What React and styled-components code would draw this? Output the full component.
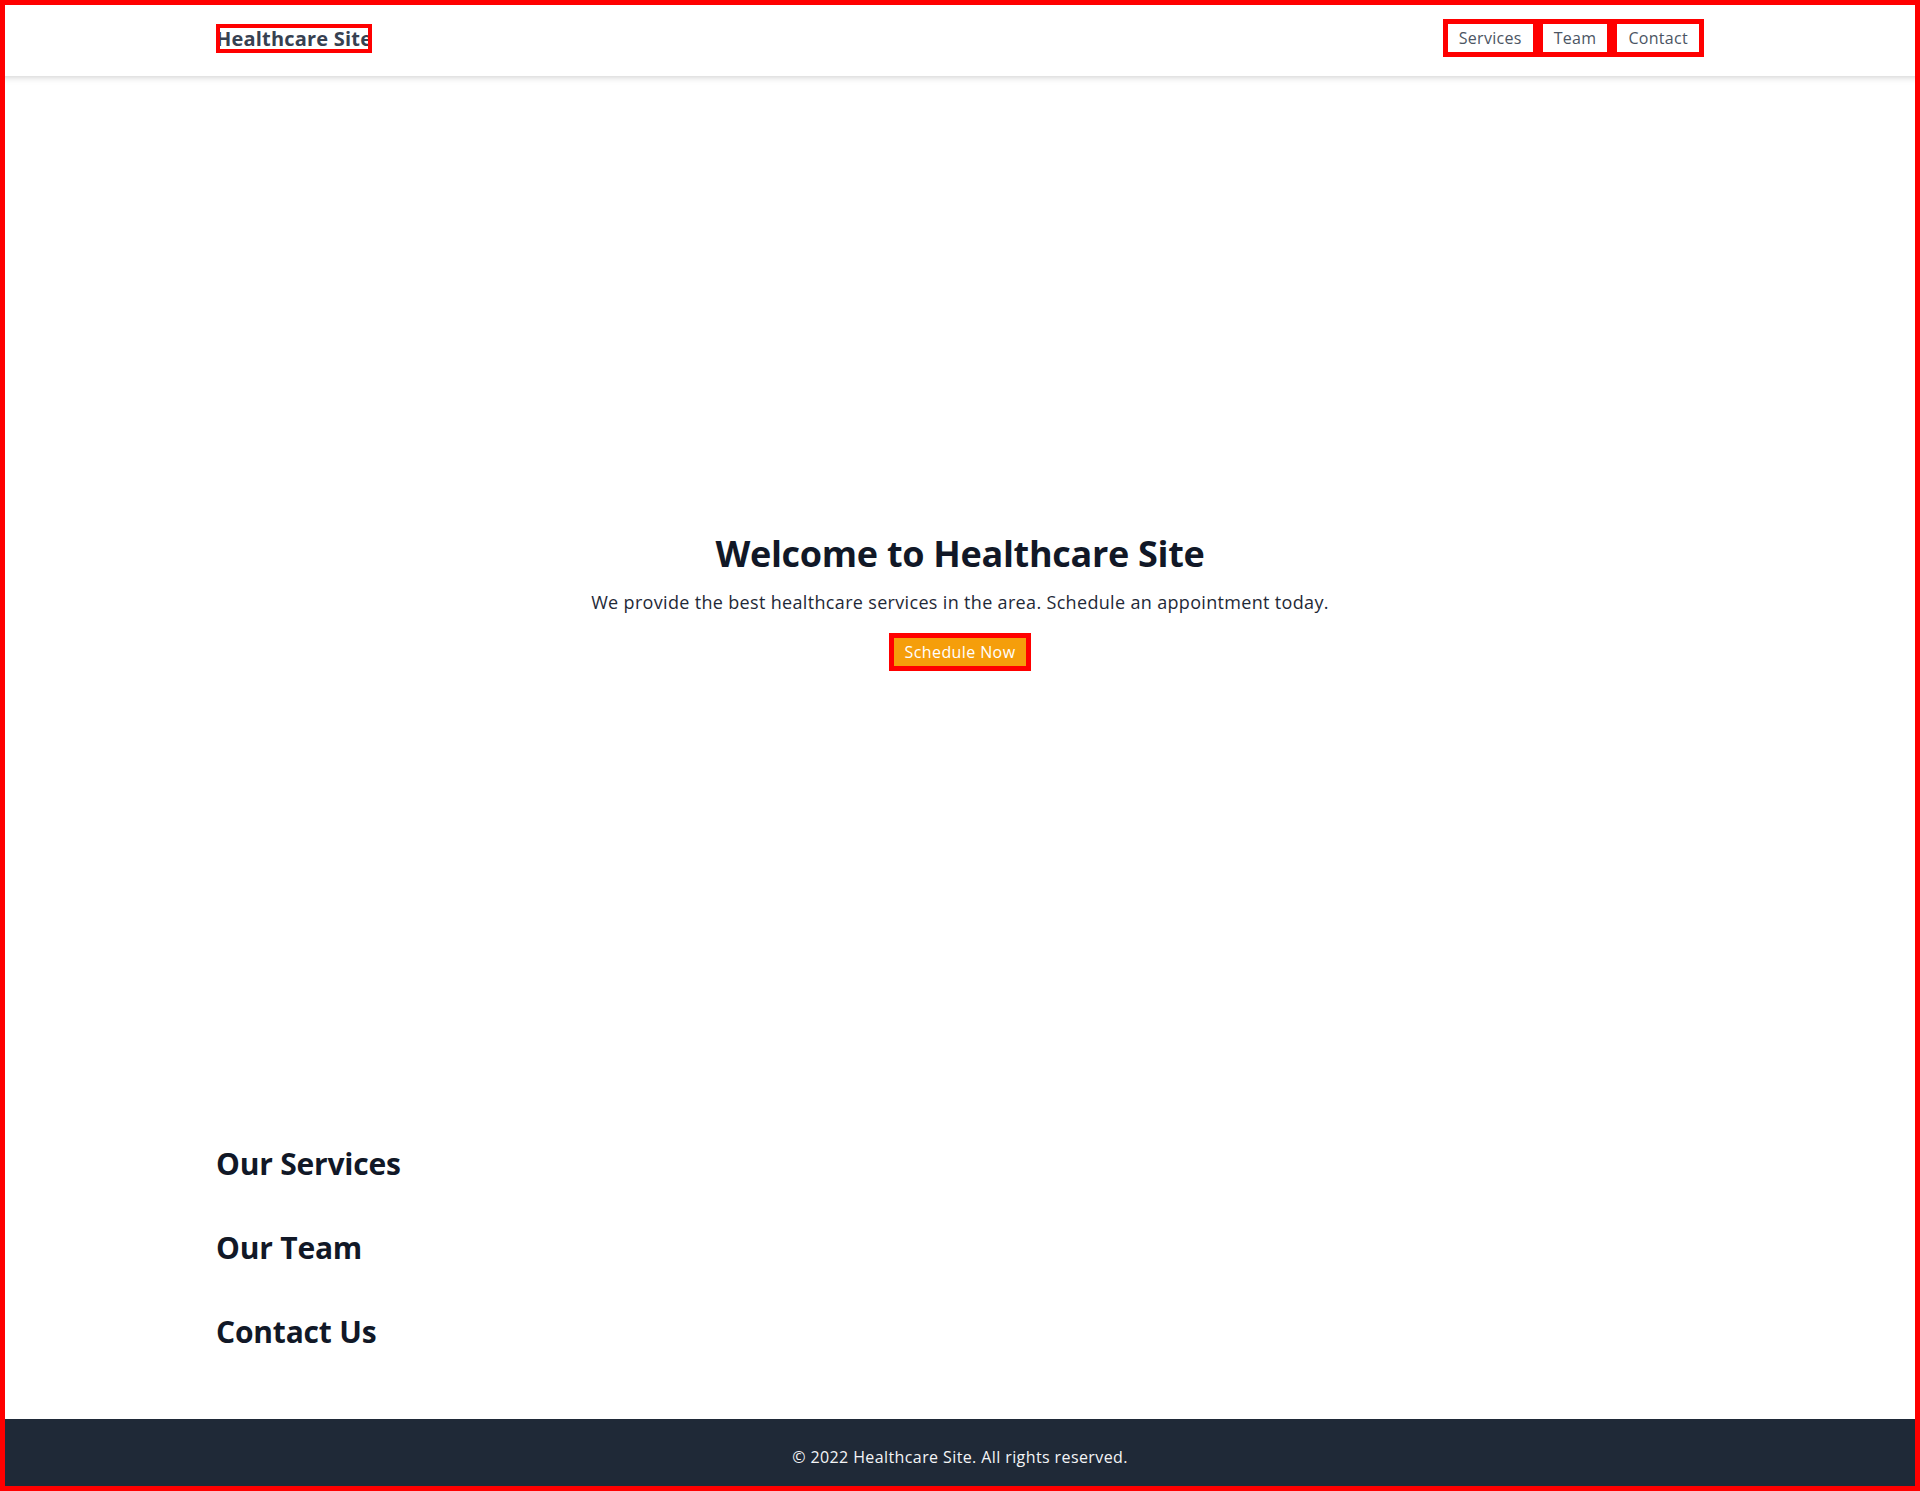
import React from "react";
import styled, { createGlobalStyle } from "styled-components";

const GlobalStyle = createGlobalStyle`
  *, *::before, *::after { box-sizing: border-box; }
  html, body { margin: 0; padding: 0; }
  body {
    font-family: "Open Sans", "Noto Sans", sans-serif;
    color: #111827;
    background: #ffffff;
    -webkit-font-smoothing: antialiased;
  }
  a { text-decoration: none; }
`;

const Page = styled.div`
  display: flex;
  flex-direction: column;
  min-height: 1491px;
`;

const Header = styled.header`
  background: #ffffff;
  box-shadow: 0 4px 6px -1px rgba(0, 0, 0, 0.1), 0 2px 4px -1px rgba(0, 0, 0, 0.06);
  position: relative;
  z-index: 1;
`;

const Container = styled.div`
  width: 100%;
  max-width: 1536px;
  margin: 0 auto;
  padding: 0 24px;
`;

const HeaderBar = styled(Container)`
  height: 76px;
  display: flex;
  align-items: center;
  justify-content: space-between;
`;

const Logo = styled.a`
  padding-top: 1px;
  font-size: 20px;
  line-height: 28px;
  font-weight: 700;
  color: #374151;
  letter-spacing: 0.2px;
  outline: 4px solid #ff0000;
  outline-offset: -4px;
`;

const Nav = styled.nav`
  display: flex;
  align-items: center;
`;

const NavLink = styled.a`
  display: block;
  padding: 7px 16px;
  font-size: 16px;
  line-height: 24px;
  color: #4b5563;
  letter-spacing: 0.3px;
  outline: 5px solid #ff0000;
  outline-offset: -5px;
`;

const Main = styled.main`
  flex: 1;
`;

const Hero = styled.section`
  display: flex;
  flex-direction: column;
  align-items: center;
  text-align: center;
  padding: 458px 24px 448px;
`;

const Title = styled.h1`
  margin: 0 0 14px;
  font-size: 36px;
  line-height: 40px;
  font-weight: 700;
  color: #111827;
  letter-spacing: -0.3px;
`;

const Subtitle = styled.p`
  margin: 0 0 17px;
  font-size: 18px;
  line-height: 28px;
  color: #1f2937;
  letter-spacing: 0.33px;
`;

const CtaButton = styled.button`
  border: none;
  background: #f59e0b;
  color: #ffffff;
  font-family: inherit;
  font-size: 16px;
  line-height: 22px;
  padding: 8px 16px;
  letter-spacing: 0.4px;
  cursor: pointer;
  outline: 5px solid #ff0000;
  outline-offset: -5px;
`;

const Sections = styled(Container)`
  padding-bottom: 48px;
`;

const Section = styled.section`
  padding: 27px 0 21px;
`;

const SectionTitle = styled.h2`
  margin: 0;
  font-size: 30px;
  line-height: 36px;
  font-weight: 700;
  color: #111827;
  letter-spacing: -0.2px;
`;

const Footer = styled.footer`
  background: #1f2937;
  padding: 26px 24px 22px;
  text-align: center;
`;

const FooterText = styled.p`
  margin: 0;
  font-size: 16px;
  line-height: 24px;
  color: #f3f4f6;
  letter-spacing: 0.4px;
`;

const Frame = styled.div`
  position: fixed;
  inset: 0;
  border: 5px solid #ff0000;
  pointer-events: none;
  z-index: 10;
`;

export default function App() {
  return (
    <>
      <GlobalStyle />
      <Page>
        <Header>
          <HeaderBar>
            <Logo href="#">Healthcare Site</Logo>
            <Nav>
              <NavLink href="#services">Services</NavLink>
              <NavLink href="#team">Team</NavLink>
              <NavLink href="#contact">Contact</NavLink>
            </Nav>
          </HeaderBar>
        </Header>
        <Main>
          <Hero>
            <Title>Welcome to Healthcare Site</Title>
            <Subtitle>
              We provide the best healthcare services in the area. Schedule an appointment today.
            </Subtitle>
            <CtaButton type="button">Schedule Now</CtaButton>
          </Hero>
          <Sections>
            <Section id="services">
              <SectionTitle>Our Services</SectionTitle>
            </Section>
            <Section id="team">
              <SectionTitle>Our Team</SectionTitle>
            </Section>
            <Section id="contact">
              <SectionTitle>Contact Us</SectionTitle>
            </Section>
          </Sections>
        </Main>
        <Footer>
          <FooterText>© 2022 Healthcare Site. All rights reserved.</FooterText>
        </Footer>
      </Page>
      <Frame />
    </>
  );
}
